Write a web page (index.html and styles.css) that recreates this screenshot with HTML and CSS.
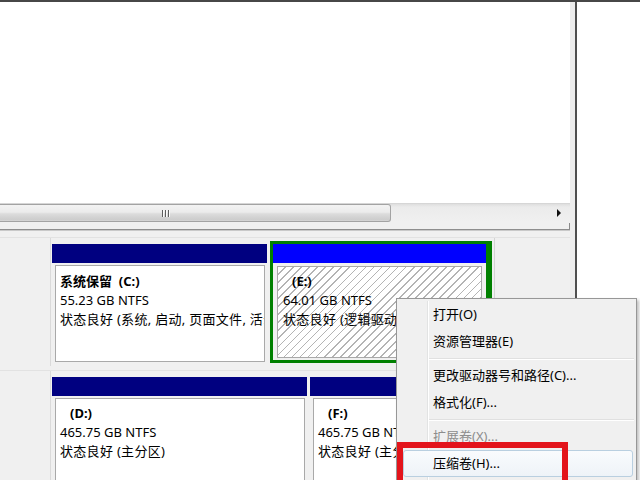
FILE: index.html
```html
<!DOCTYPE html>
<html lang="zh-CN">
<head>
<meta charset="utf-8">
<title>磁盘管理</title>
<link rel="stylesheet" href="styles.css">
</head>
<body>
<div class="screen">
  <div class="topline"></div>
  <div class="main">
    <div class="mmc">
      <div class="upper"></div>
      <div class="hscroll">
        <div class="thumb"><div class="grip"><span></span><span></span><span></span></div></div>
        <div class="arrow-btn"><span class="tri"></span></div>
      </div>
      <div class="splitgap"></div>
      <div class="lower">
        <div class="disk-row row1">
          <div class="disk-label"></div>
          <div class="parts">
            <div class="part part-c">
              <div class="bar"></div>
              <div class="pbox box-c">
                <div class="name">系统保留&nbsp;&nbsp;(C:)</div>
                <div>55.23 GB NTFS</div>
                <div class="status">状态良好 (系统, 启动, 页面文件, 活动, 故障转储, 主分区)</div>
              </div>
            </div>
            <div class="part part-e">
              <div class="bar bar-bright"></div>
              <div class="pbox hatch box-e">
                <div class="name indent">(E:)</div>
                <div>64.01 GB NTFS</div>
                <div class="status">状态良好 (逻辑驱动器)</div>
              </div>
            </div>
          </div>
        </div>
        <div class="disk-row row2">
          <div class="disk-label"></div>
          <div class="parts">
            <div class="part part-d">
              <div class="bar"></div>
              <div class="pbox box-d">
                <div class="name indent">(D:)</div>
                <div>465.75 GB NTFS</div>
                <div class="status">状态良好 (主分区)</div>
              </div>
            </div>
            <div class="part part-f">
              <div class="bar"></div>
              <div class="pbox box-d">
                <div class="name indent">(F:)</div>
                <div>465.75 GB NTFS</div>
                <div class="status">状态良好 (主分区)</div>
              </div>
            </div>
          </div>
        </div>
      </div>
    </div>
    <div class="strip"></div>
    <div class="side"></div>
  </div>

  <div class="ctx-menu">
    <div class="mi">打开(O)</div>
    <div class="mi">资源管理器(E)</div>
    <div class="msep"></div>
    <div class="mi">更改驱动器号和路径(C)...</div>
    <div class="mi">格式化(F)...</div>
    <div class="msep"></div>
    <div class="mi disabled">扩展卷(X)...</div>
    <div class="mi hot">压缩卷(H)...</div>
  </div>
  <div class="callout"></div>
</div>
</body>
</html>
```

FILE: styles.css
```css
* { box-sizing: border-box; }
html, body { margin: 0; padding: 0; }
body {
  width: 640px;
  height: 480px;
  overflow: hidden;
  background: #fff;
  font-family: "Noto Sans", "Noto Sans CJK SC", sans-serif;
  font-size: 13px;
  color: #000;
}
.screen { position: relative; width: 640px; height: 480px; overflow: hidden; }
.topline { height: 2px; background: #474747; }
.main { display: flex; height: 478px; }
.mmc { width: 570px; display: flex; flex-direction: column; overflow: hidden; }
.strip { width: 5px; background: #ededed; }
.side { flex: 1; background: #fff; border-left: 2px solid #4f4f4f; }

.upper { flex: none; height: 201px; background: #fff; }

.hscroll {
  flex: none;
  height: 19px;
  display: flex;
  align-items: stretch;
  background: linear-gradient(#dedede 0, #ebebeb 3px, #f0f0f0 100%);
  border-top: 1px solid #d6d6d6;
}
.thumb {
  width: 391px;
  display: flex;
  align-items: center;
  border: 1px solid #a3a3a3;
  border-left: 0;
  border-radius: 0 3px 3px 0;
  background: linear-gradient(#f3f3f3 0, #ebebeb 45%, #dcdcdc 55%, #cdcdcd 90%, #d6d6d6 100%);
}
.grip { display: flex; gap: 2px; margin-left: 162px; }
.grip span { width: 1px; height: 7px; background: #5e5e5e; box-shadow: 1px 0 #fafafa; }
.arrow-btn { margin-left: auto; width: 17px; display: flex; align-items: center; justify-content: center; }
.tri {
  width: 0; height: 0;
  border-left: 4px solid #111;
  border-top: 4px solid transparent;
  border-bottom: 4px solid transparent;
  margin-left: -6px;
}

.splitgap { flex: none; position: relative; height: 7px; background: #f0f0f0; }
.splitgap::after {
  content: "";
  position: absolute;
  right: 0; bottom: 0;
  width: 1px; height: 6px;
  background: #8a8a8a;
}

.lower {
  flex: 1;
  min-height: 0;
  overflow: hidden;
  background: #f0f0f0;
  border-top: 1px solid #8e8e8e;
  box-shadow: inset 0 1px #c9c9c9;
  padding-top: 7px;
}
.disk-row { display: flex; height: 129px; border-top: 1px solid #e2e2e2; }
.row2 { margin-top: 4px; height: 120px; }
.disk-label { width: 51px; border-right: 1px solid #dadada; background: #f0f0f0; }
.parts {
  display: flex;
  align-items: flex-start;
  width: 444px;
  padding: 3px 0 0 1px;
  border-right: 1px solid #d4d4d4;
}
.part { flex: none; }
.bar { height: 19px; background: #000080; }
.bar-bright { background: #0000ff; }

.pbox {
  border: 1px solid #a9a9a9;
  background: #fff;
  line-height: 19px;
  white-space: nowrap;
  overflow: hidden;
}
.status { letter-spacing: 0.3px; }
.name { font-weight: bold; }
.indent { padding-left: 10px; }

.part-c { width: 215px; padding-top: 3px; }
.box-c { margin: 2px 2px 0 3px; height: 97px; padding: 6px 0 0 4px; }

.part-e {
  width: 222px;
  margin-left: 3px;
  border: 3px solid #008000;
  border-right-width: 6px;
  padding-bottom: 2px;
}
.box-e { margin: 3px 4px 0 4px; height: 92px; padding: 5px 0 0 5px; }
.box-e .indent { padding-left: 9px; }
.hatch {
  background: repeating-linear-gradient(135deg, #fff 0 4.6px, #b4b4b4 4.6px 5.7px);
}

.part-d { width: 255px; padding-top: 3px; }
.part-f { width: 180px; margin-left: 3px; padding-top: 3px; }
.box-d { margin: 2px 2px 0 3px; height: 120px; padding: 5px 0 0 4px; }

.ctx-menu {
  position: absolute;
  left: 396px;
  top: 298px;
  width: 241px;
  height: 200px;
  border: 1px solid #979797;
  background: #f0f0f0;
  padding: 2px;
  box-shadow: 2px 2px 3px rgba(0, 0, 0, 0.25);
}
.ctx-menu::before {
  content: "";
  position: absolute;
  left: 30px; top: 2px; bottom: 0;
  width: 1px;
  background: #e2e3e3;
  box-shadow: 1px 0 #fff;
}
.mi {
  position: relative;
  height: 27px;
  line-height: 27px;
  padding-left: 34px;
  white-space: nowrap;
}
.mi.disabled { color: #8d8d8d; }
.mi.hot {
  margin: 0 1px 0 4px;
  padding-left: 29px;
  line-height: 25px;
  border: 1px solid #b9cfe0;
  border-radius: 3px;
  background: linear-gradient(#f9fbfd, #eef3f8);
}
.msep { position: relative; height: 7px; margin-left: 30px; }
.msep::after {
  content: "";
  position: absolute;
  left: 0; right: 0; top: 3px;
  height: 1px;
  background: #e0e0e0;
  box-shadow: 0 1px #fff;
}

.callout {
  position: absolute;
  left: 397px;
  top: 442px;
  width: 171px;
  height: 46px;
  border: 6px solid #e3141b;
}
```
